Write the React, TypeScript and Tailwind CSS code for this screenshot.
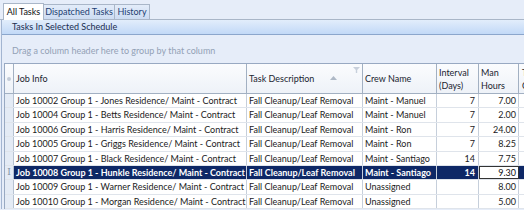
import React from 'react'

const rows = [
  { job: 'Job 10002 Group 1 - Jones Residence/ Maint - Contract', task: 'Fall Cleanup/Leaf Removal', crew: 'Maint - Manuel', interval: '7', hours: '7.00' },
  { job: 'Job 10004 Group 1 - Betts Residence/ Maint - Contract', task: 'Fall Cleanup/Leaf Removal', crew: 'Maint - Manuel', interval: '7', hours: '2.00' },
  { job: 'Job 10006 Group 1 - Harris Residence/ Maint - Contract', task: 'Fall Cleanup/Leaf Removal', crew: 'Maint - Ron', interval: '7', hours: '24.00' },
  { job: 'Job 10005 Group 1 - Griggs Residence/ Maint - Contract', task: 'Fall Cleanup/Leaf Removal', crew: 'Maint - Ron', interval: '7', hours: '8.25' },
  { job: 'Job 10007 Group 1 - Black Residence/ Maint - Contract', task: 'Fall Cleanup/Leaf Removal', crew: 'Maint - Santiago', interval: '14', hours: '7.75' },
  { job: 'Job 10008 Group 1 - Hunkle Residence/ Maint - Contract', task: 'Fall Cleanup/Leaf Removal', crew: 'Maint - Santiago', interval: '14', hours: '9.30', selected: true },
  { job: 'Job 10009 Group 1 - Warner Residence/ Maint - Contract', task: 'Fall Cleanup/Leaf Removal', crew: 'Unassigned', interval: '', hours: '8.00' },
  { job: 'Job 10010 Group 1 - Morgan Residence/ Maint - Contract', task: 'Fall Cleanup/Leaf Removal', crew: 'Unassigned', interval: '', hours: '5.00' },
]

export default function App() {
  return (
    <div className="w-[524px] h-[210px] overflow-hidden bg-[#e6edf9] text-[9px] text-[#1b1b1b] whitespace-nowrap" style={{ fontFamily: 'Lato, "Liberation Sans", sans-serif' }}>
      {/* tabs */}
      <div className="h-[20px] flex items-end pl-[3px] border-b border-[#a9b6c8]">
        <div className="h-[17px] w-[41px] bg-white border border-b-0 border-[#a9b6c8] flex items-center justify-center text-[#111] -mb-px relative z-10">All Tasks</div>
        <div className="h-[15px] w-[71px] bg-gradient-to-b from-[#e3ecf9] to-[#cddcf2] border border-l-0 border-b-0 border-[#a9b6c8] flex items-center justify-center text-[#1d3f73]">Dispatched Tasks</div>
        <div className="h-[15px] w-[35px] bg-gradient-to-b from-[#e3ecf9] to-[#cddcf2] border border-l-0 border-b-0 border-[#a9b6c8] flex items-center justify-center text-[#1d3f73]">History</div>
      </div>
      <div className="ml-[1px] border-l border-[#a3b5d1] pl-[2px]">
        {/* panel header */}
        <div className="h-[15px] -ml-[2px] bg-gradient-to-b from-[#e2edfb] to-[#c2d9f7] border-b border-[#8ba6cc] flex items-center pl-[10px] text-[#1b2d4f]">Tasks In Selected Schedule</div>
        {/* group panel */}
        <div className="h-[28px] -ml-[2px] flex items-center pl-[10px] pt-[4px] text-[#93a1b6]">Drag a column header here to group by that column</div>
        {/* grid */}
        <div className="border-l border-t border-[#98a9c2] bg-white">
          <div className="flex h-[30px] bg-gradient-to-b from-[#fbfcfe] to-[#eef2f8] border-b border-[#a2b0c2] text-[#1a2430]">
            <div className="w-[9px] shrink-0 border-r border-[#a2b0c2] flex items-center justify-center">
              <div className="w-[4px] h-[4px] rounded-full bg-[#c3ccd8]" />
            </div>
            <div className="w-[233px] shrink-0 border-r border-[#a2b0c2] flex items-center pl-[2px]">Job Info</div>
            <div className="w-[116px] shrink-0 border-r border-[#a2b0c2] flex items-center pl-[2px] relative">
              Task Description
              <svg className="absolute left-[83px] top-[12px]" width="7" height="4" viewBox="0 0 7 4"><path d="M0 4 L3.5 0 L7 4 Z" fill="#aeb8c6" /></svg>
              <svg className="absolute left-[106px] top-[3px]" width="7" height="6" viewBox="0 0 7 6"><path d="M0 0 H7 L4.2 3 V6 H2.8 V3 Z" fill="#c8d0dc" /></svg>
            </div>
            <div className="w-[74px] shrink-0 border-r border-[#a2b0c2] flex items-center pl-[2px]">Crew Name</div>
            <div className="w-[42px] shrink-0 border-r border-[#a2b0c2] flex items-center pl-[2px] leading-[13px]">Interval<br />(Days)</div>
            <div className="w-[40px] shrink-0 border-r border-[#a2b0c2] flex items-center pl-[2px] leading-[13px]">Man<br />Hours</div>
            <div className="w-[40px] shrink-0 flex items-center pl-[3px] leading-[13px]">Total<br />Cost</div>
          </div>
          {rows.map((r) => (
            <div key={r.job} className={`flex h-[14.4px] items-center border-b border-[#dfe4eb] ${r.selected ? 'bg-[#0e2866] text-white font-bold' : ''}`}>
              <div className="w-[9px] h-full shrink-0 bg-[#e4ebf5] border-r border-[#b6c2d2] flex items-center justify-center text-[9px] text-[#8393a8] font-normal" style={{ fontFamily: '"DejaVu Serif", serif' }}>
                {r.selected ? 'I' : ''}
              </div>
              <div className="w-[233px] h-full shrink-0 border-r border-[#c6cfdb] flex items-center pl-[2px] overflow-hidden">{r.job}</div>
              <div className="w-[116px] h-full shrink-0 border-r border-[#c6cfdb] flex items-center pl-[2px] overflow-hidden">{r.task}</div>
              <div className="w-[74px] h-full shrink-0 border-r border-[#c6cfdb] flex items-center pl-[2px] overflow-hidden">{r.crew}</div>
              <div className="w-[42px] h-full shrink-0 border-r border-[#c6cfdb] flex items-center justify-end pr-[3px]">{r.interval}</div>
              <div className={`w-[40px] h-full shrink-0 flex items-center justify-end pr-[2px] ${r.selected ? 'bg-white text-[#111] font-normal border border-[#333]' : 'border-r border-[#c6cfdb]'}`}>{r.hours}</div>
              <div className="w-[40px] h-full shrink-0" />
            </div>
          ))}
        </div>
      </div>
    </div>
  )
}
